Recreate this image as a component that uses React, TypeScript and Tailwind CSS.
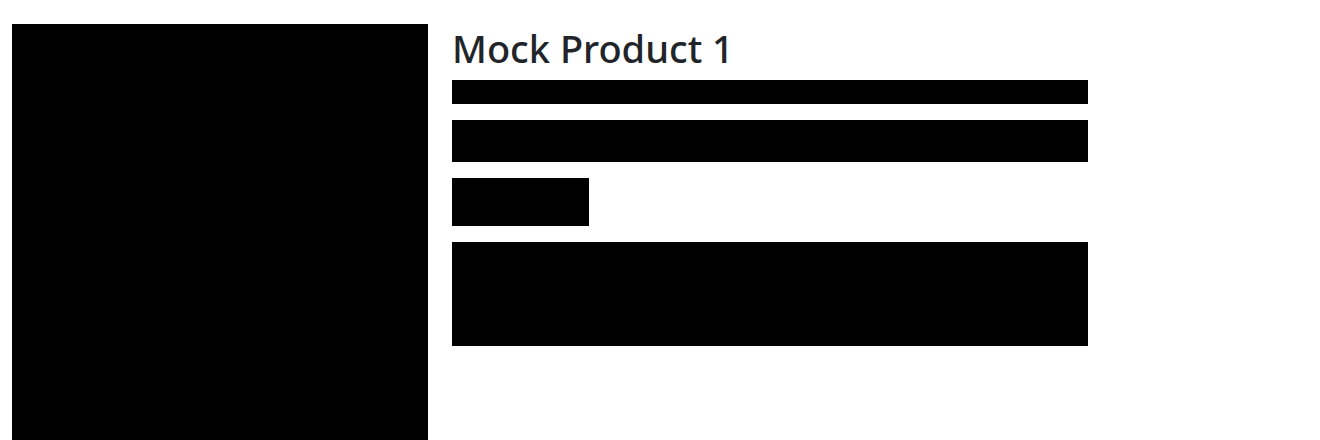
export default function App() {
  return (
    <div className="min-h-screen bg-white pl-3 pt-6 font-['Noto_Sans',sans-serif] text-[#212529]">
      <div className="flex gap-6">
        <div className="h-[416px] w-[416px] shrink-0 bg-black" />
        <div className="flex w-[636px] flex-col">
          <h1 className="mb-2 text-[38px] font-medium leading-[48px]">Mock Product 1</h1>
          <div className="flex flex-col gap-4">
            <div className="h-6 w-full bg-black" />
            <div className="h-[42px] w-full bg-black" />
            <div className="h-12 w-[137px] bg-black" />
            <div className="h-[104px] w-full bg-black" />
          </div>
        </div>
      </div>
    </div>
  );
}
